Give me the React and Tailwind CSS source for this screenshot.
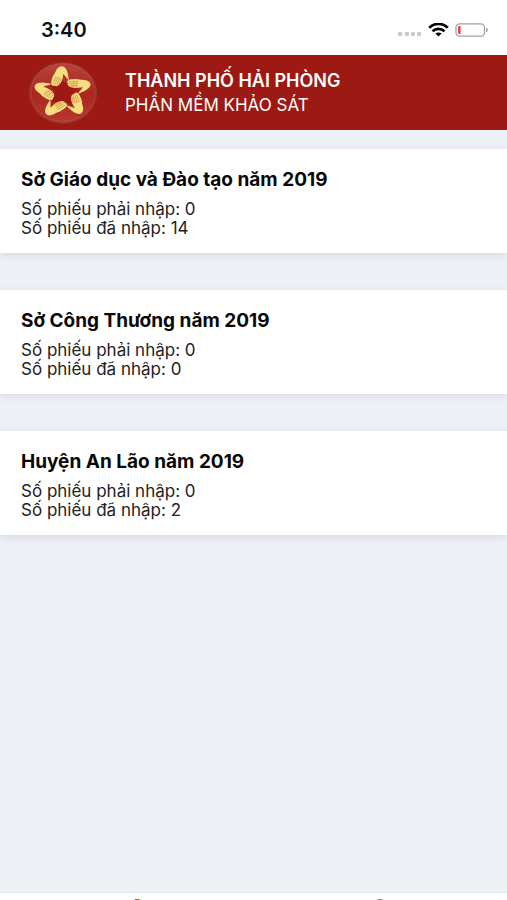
import React from "react";

const surveys = [
  { id: 1, name: "Sở Giáo dục và Đào tạo năm 2019", required: 0, entered: 14 },
  { id: 2, name: "Sở Công Thương năm 2019", required: 0, entered: 0 },
  { id: 3, name: "Huyện An Lão năm 2019", required: 0, entered: 2 },
];

function StatusBar() {
  return (
    <div className="flex h-[55px] shrink-0 items-center justify-between bg-white pt-1 pr-[18px] pl-[41px]">
      <span className="text-[20px] leading-6 font-semibold text-[#111]">3:40</span>
      <div className="flex items-center gap-[6px]">
        <svg width="24" height="12" viewBox="0 0 24 12" fill="#c9c9c9">
          <rect x="0" y="8" width="4" height="4" rx="1" />
          <rect x="7" y="8" width="4" height="4" rx="1" />
          <rect x="13" y="8" width="4" height="4" rx="1" />
          <rect x="19" y="8" width="4" height="4" rx="1" />
        </svg>
        <svg width="21" height="14" viewBox="0 0 21 14" fill="none" stroke="#050505">
          <path d="M1.2 4.8C6.4 -0.4 14.6 -0.4 19.8 4.8" strokeWidth="2.8" />
          <path d="M4.5 8.3C8 5 13 5 16.5 8.3" strokeWidth="2.6" />
          <path d="M7.4 10.6C9.2 9 11.8 9 13.6 10.6L10.5 13.6Z" fill="#050505" stroke="none" />
        </svg>
        <svg width="34" height="14" viewBox="0 0 34 14" fill="none">
          <rect x="1" y="0.8" width="28.5" height="12.4" rx="3.6" stroke="#a3a3a3" strokeWidth="1.3" />
          <rect x="3" y="3" width="2.6" height="8" rx="1" fill="#ee4050" />
          <path d="M31 4.8C33.6 5.6 33.6 8.4 31 9.2Z" fill="#a3a3a3" />
        </svg>
      </div>
    </div>
  );
}

// One hand of the star, pointing up; the logo repeats it every 72 degrees
function Hand({ angle }) {
  return (
    <g transform={`rotate(${angle})`}>
      <path
        d="M-32 -29C-31 -40 -28 -50 -22 -58C-18 -69 -13 -79 -3 -79C6 -78 11 -68 13 -57L16 -37C10 -42 6 -50 2 -55C0 -56 0 -53 0 -49C-1 -38 -5 -28 -12 -22C-16 -19 -20 -19 -21 -21C-27 -19 -32 -22 -32 -29Z"
        fill="#f8de80"
      />
      <path
        d="M-27 -26L-18 -49M-22 -24L-12 -48M-17 -23L-7 -45M-12 -25L-4 -41"
        stroke="#bf8240"
        strokeWidth="1.6"
        fill="none"
      />
      <path d="M-28 -40L-9 -30M-25 -48L-5 -38" stroke="#d5a45a" strokeWidth="1.2" fill="none" />
    </g>
  );
}

function Logo() {
  return (
    <svg width="90" height="75" viewBox="0 0 270 225" className="shrink-0">
      <defs>
        <linearGradient id="disc" x1="0" y1="0" x2="0" y2="1">
          <stop offset="0" stopColor="#b8443b" />
          <stop offset="0.5" stopColor="#ab2620" />
          <stop offset="1" stopColor="#b53830" />
        </linearGradient>
      </defs>
      <ellipse cx="129" cy="114" rx="101" ry="91" fill="url(#disc)" stroke="#8b382c" strokeWidth="3" />
      <ellipse cx="129" cy="112" rx="96" ry="86" fill="none" stroke="#bd5148" strokeWidth="1.5" />
      <path d="M120 68L143 91L177 98L153 121L156 153L127 138L96 143L106 113L86 84L112 88Z" fill="#9d1a14" />
      <g transform="translate(129 113) scale(1.11 1)">
        {[0, 72, 144, 216, 288].map((angle) => (
          <Hand key={angle} angle={angle} />
        ))}
      </g>
    </svg>
  );
}

function Header() {
  return (
    <header className="flex h-[75px] shrink-0 items-center bg-[#9d1913] pl-5 text-white">
      <Logo />
      <div className="ml-[15px]">
        <h1 className="text-[18px] leading-6 font-semibold">THÀNH PHỐ HẢI PHÒNG</h1>
        <p className="text-[17px] leading-6">PHẦN MỀM KHẢO SÁT</p>
      </div>
    </header>
  );
}

function SurveyCard({ survey }) {
  return (
    <li className="bg-white px-[21px] pt-[19px] pb-[15px] shadow-[0_2px_8px_rgba(0,0,0,0.10)]">
      <h2 className="text-[19px] leading-6 font-bold text-[#080808]">{survey.name}</h2>
      <div className="mt-2 text-[17px] leading-[19px] text-[#222]">
        <p>Số phiếu phải nhập: {survey.required}</p>
        <p>Số phiếu đã nhập: {survey.entered}</p>
      </div>
    </li>
  );
}

function TabBar() {
  return (
    <nav className="grid h-2 shrink-0 grid-cols-2 overflow-hidden border-t border-[#e4e5e7] bg-white">
      <a href="#surveys" aria-label="Khảo sát" className="flex justify-center pt-1.5 pl-5">
        <svg width="24" height="24" viewBox="0 0 24 24" fill="#a0664f" className="shrink-0">
          <path d="M10 0H14L22 10V24H2V10Z" />
        </svg>
      </a>
      <a href="#account" aria-label="Tài khoản" className="flex justify-center pt-1.5">
        <svg width="24" height="24" viewBox="0 0 24 24" fill="#777" className="shrink-0">
          <circle cx="12" cy="6" r="6" />
          <path d="M1 24C1 11 23 11 23 24Z" />
        </svg>
      </a>
    </nav>
  );
}

export default function App() {
  return (
    <div className="flex h-screen flex-col overflow-hidden bg-[#edf0f4] font-['Inter','Noto_Sans',sans-serif]">
      <StatusBar />
      <Header />
      <main className="flex-1 overflow-hidden pt-[19px]">
        <ul className="flex flex-col gap-[37px]">
          {surveys.map((survey) => (
            <SurveyCard key={survey.id} survey={survey} />
          ))}
        </ul>
      </main>
      <TabBar />
    </div>
  );
}
